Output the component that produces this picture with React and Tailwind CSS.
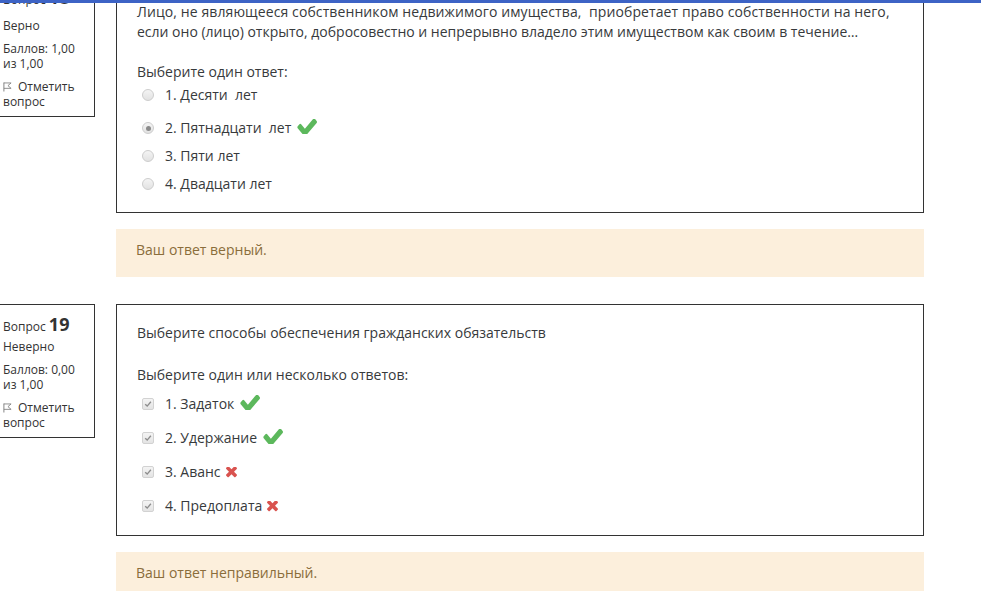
const font = { fontFamily: '"Open Sans", "Liberation Sans", sans-serif' };

function Check({ className = '' }) {
  return (
    <svg viewBox="14 372 1657 1000" preserveAspectRatio="none" className={'w-[21px] h-[15px] fill-[#5cb85c] ' + className}>
      <path d="M1671 566q0 40-28 68l-724 724-136 136q-28 28-68 28t-68-28l-136-136-362-362q-28-28-28-68t28-68l136-136q28-28 68-28t68 28l294 295 656-657q28-28 68-28t68 28l136 136q28 28 28 68z" />
    </svg>
  );
}

function Cross() {
  return (
    <svg viewBox="110 450 1188 1188" className="w-[11px] h-[11px] fill-[#d9534f]">
      <path d="M1298 1322q0 40-28 68l-136 136q-28 28-68 28t-68-28l-294-294-294 294q-28 28-68 28t-68-28l-136-136q-28-28-28-68t28-68l294-294-294-294q-28-28-28-68t28-68l136-136q28-28 68-28t68 28l294 294 294-294q28-28 68-28t68 28l136 136q28 28 28 68t-28 68l-294 294 294 294q28 28 28 68z" />
    </svg>
  );
}

function Radio({ checked }) {
  return (
    <span className="w-[12px] h-[12px] rounded-full border border-[#cdcdcd] bg-gradient-to-b from-[#f4f4f4] to-[#e2e2e2] flex items-center justify-center shrink-0">
      {checked && <span className="w-[5px] h-[5px] rounded-full bg-[#8a8a8a]" />}
    </span>
  );
}

function Box() {
  return (
    <span className="w-[12px] h-[12px] rounded-[2px] border border-[#d2d2d2] bg-gradient-to-b from-[#f4f4f4] to-[#e4e4e4] flex items-center justify-center shrink-0">
      <svg viewBox="0 0 10 10" className="w-[8px] h-[8px]">
        <path d="M1.5 5.2 L4 7.6 L8.6 2.2" fill="none" stroke="#8d8d8d" strokeWidth="1.7" />
      </svg>
    </span>
  );
}

function Flag() {
  return (
    <svg viewBox="0 0 10 11" className="w-[9px] h-[10px] shrink-0">
      <path d="M1 0.5 V10.5" stroke="#777" strokeWidth="1" />
      <path d="M1 1 H9 L5.5 4 L9 7 H1" fill="none" stroke="#777" strokeWidth="0.9" />
    </svg>
  );
}

function Info({ num, state, grade, first }) {
  return (
    <div className="-ml-[8px] w-[103px] shrink-0 self-start border border-[#333] pl-[10px] pt-[8px] pb-[7px] text-[12px] text-[#333]">
      <div className={'leading-[22px] h-[22px] ' + (first ? '-mt-[6px]' : '')}>
        Вопрос <span className="text-[18px] font-bold">{num}</span>
      </div>
      <div className={'leading-[15px] ' + (first ? 'mt-[10px]' : 'mt-[4px]')}>{state}</div>
      <div className="leading-[15px] mt-[8px]">Баллов: {grade}<br />из 1,00</div>
      <div className="leading-[15px] mt-[8px]">
        <div className="flex items-center gap-[6px]"><Flag />Отметить</div>
        <div>вопрос</div>
      </div>
    </div>
  );
}

function Option({ control, text, mark, tall }) {
  return (
    <div className={'flex items-end ml-[5px] leading-[20px] pb-[4px] ' + (tall ? tall : 'pt-[4px]')}>
      <div className="h-[20px] flex items-center">{control}</div>
      <span className="ml-[11px] whitespace-pre">{text}</span>
      {mark === 'ok' && <Check className="ml-[5px] mb-[4px]" />}
      {mark === 'bad' && <span className="ml-[5px] h-[20px] flex items-center"><Cross /></span>}
    </div>
  );
}

function Question({ num, state, grade, first, children, feedback }) {
  return (
    <div className="flex">
      <Info num={num} state={state} grade={grade} first={first} />
      <div className="ml-[21px] w-[808px] shrink-0">
        <div className="border border-[#333] text-[14px] text-[#373a3c]">{children}</div>
        <div className="mt-[16px] bg-[#fcefdc] text-[#8a6d3b] text-[14px] leading-[20px] pl-[20px] pt-[11px] pb-[17px]">{feedback}</div>
      </div>
    </div>
  );
}

export default function App() {
  return (
    <div className="relative w-[981px] h-[591px] overflow-hidden bg-white" style={font}>
      <div className="absolute top-0 left-0 right-0 h-[3px] bg-[#3d63c5] z-10" />
      <div className="-mt-[17px]">
        <Question first num="18" state="Верно" grade="1,00" feedback="Ваш ответ верный.">
          <div className="pl-[20px] pt-[18px] pb-[14px] leading-[20px]">
            <div className="whitespace-pre tracking-[0.1px]">Лицо, не являющееся собственником недвижимого имущества,  приобретает право собственности на него,</div>
            <div className="whitespace-pre">если оно (лицо) открыто, добросовестно и непрерывно владело этим имуществом как своим в течение…</div>
            <div className="mt-[20px]">Выберите один ответ:</div>
            <div className="-mt-px">
              <Option control={<Radio />} text="1. Десяти  лет" />
              <Option control={<Radio checked />} text="2. Пятнадцати  лет" mark="ok" tall="pt-[9px]" />
              <Option control={<Radio />} text="3. Пяти лет" />
              <Option control={<Radio />} text="4. Двадцати лет" />
            </div>
          </div>
        </Question>
        <div className="h-[27px]" />
        <Question num="19" state="Неверно" grade="0,00" feedback="Ваш ответ неправильный.">
          <div className="pl-[20px] pt-[18px] pb-[15px] leading-[20px]">
            <div>Выберите способы обеспечения гражданских обязательств</div>
            <div className="mt-[22px]">Выберите один или несколько ответов:</div>
            <div className="-mt-px">
              <Option control={<Box />} text="1. Задаток" mark="ok" tall="pt-[10px]" />
              <Option control={<Box />} text="2. Удержание" mark="ok" tall="pt-[10px]" />
              <Option control={<Box />} text="3. Аванс" mark="bad" tall="pt-[10px]" />
              <Option control={<Box />} text="4. Предоплата" mark="bad" tall="pt-[10px]" />
            </div>
          </div>
        </Question>
      </div>
    </div>
  );
}
